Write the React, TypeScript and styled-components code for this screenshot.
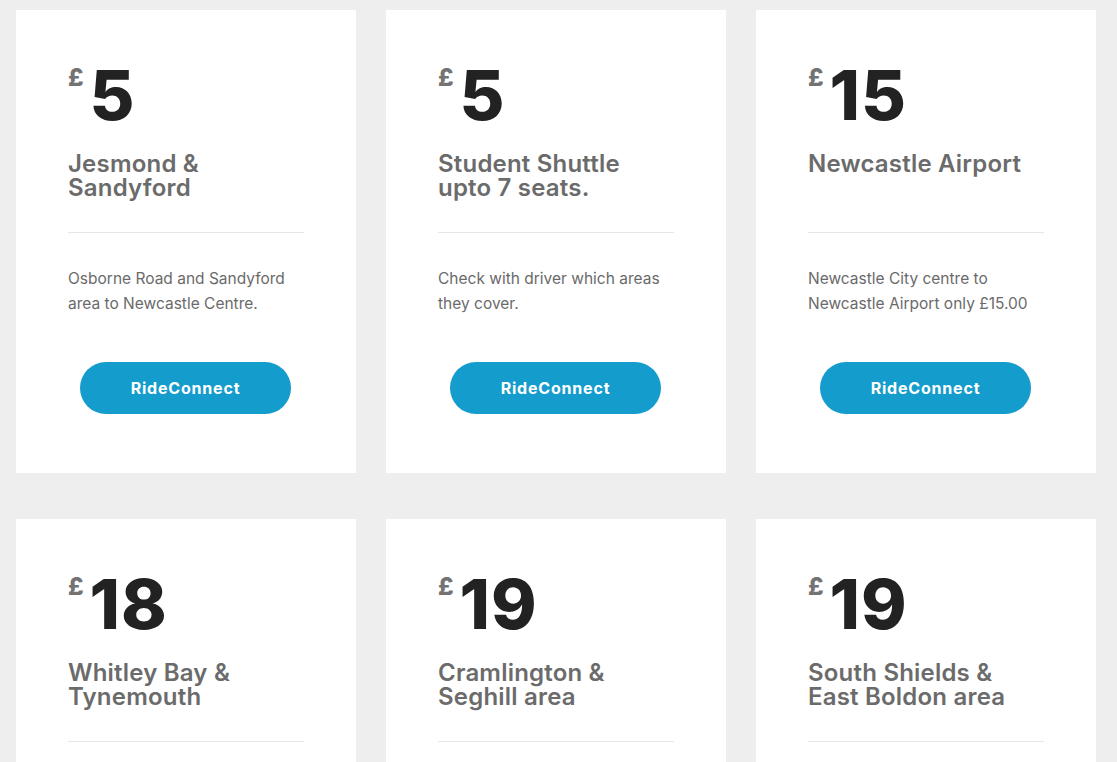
import React from 'react'
import styled, {createGlobalStyle} from 'styled-components'

const GlobalStyle = createGlobalStyle`
  html, body {
    margin: 0;
    padding: 0;
    background: #eeeeee;
  }
  body {
    font-family: 'Inter', 'Roboto', sans-serif;
  }
`

const Grid = styled.section`
  display: grid;
  grid-template-columns: repeat(3, 340px);
  column-gap: 30px;
  row-gap: 46px;
  padding: 10px 16px;
`

const Card = styled.div`
  background: #ffffff;
  padding: 52px 52px 59px;
  display: flex;
  flex-direction: column;
`

const Price = styled.div`
  display: flex;
  align-items: flex-start;
  gap: 6px;
`

const Currency = styled.span`
  font-size: 24px;
  font-weight: 800;
  line-height: 1;
  color: #737373;
  margin-top: 4px;
`

const Amount = styled.span`
  font-size: 69px;
  font-weight: 800;
  line-height: 66px;
  color: #222222;
  letter-spacing: 1px;
`

const Title = styled.h3`
  margin: 24px 0 0;
  font-size: 24px;
  font-weight: 600;
  line-height: 24px;
  letter-spacing: 0.2px;
  min-height: 48px;
  color: #6b6b6b;
`

const Divider = styled.hr`
  border: 0;
  border-top: 1px solid #e6e6e6;
  margin: 32px 0 0;
`

const Description = styled.p`
  margin: 33px 0 0;
  font-size: 15.5px;
  line-height: 25px;
  min-height: 50px;
  color: #6a6a6a;
`

const Button = styled.button`
  align-self: center;
  margin: 46px 1px 0 0;
  width: 211px;
  height: 52px;
  border: 0;
  border-radius: 26px;
  background: #149ccc;
  color: #ffffff;
  font-family: inherit;
  font-size: 16px;
  font-weight: 700;
  letter-spacing: 0.8px;
  cursor: pointer;
`

type Fare = {amount: string; lines: string[]; text: string}

const fares: Fare[] = [
  {amount: '5', lines: ['Jesmond &', 'Sandyford'], text: 'Osborne Road and Sandyford area to Newcastle Centre.'},
  {amount: '5', lines: ['Student Shuttle', 'upto 7 seats.'], text: 'Check with driver which areas they cover.'},
  {amount: '15', lines: ['Newcastle Airport'], text: 'Newcastle City centre to Newcastle Airport only £15.00'},
  {amount: '18', lines: ['Whitley Bay &', 'Tynemouth'], text: 'Whitley Bay and Tynemouth to Newcastle Centre.'},
  {amount: '19', lines: ['Cramlington &', 'Seghill area'], text: 'Cramlington and Seghill area to Newcastle Centre.'},
  {amount: '19', lines: ['South Shields &', 'East Boldon area'], text: 'South Shields and East Boldon to Newcastle Centre.'},
]

export default function App() {
  return (
    <>
      <GlobalStyle />
      <Grid>
        {fares.map((f, i) => (
          <Card key={i}>
            <Price>
              <Currency>£</Currency>
              <Amount>{f.amount}</Amount>
            </Price>
            <Title>
              {f.lines.map((l, j) => (
                <React.Fragment key={j}>
                  {j > 0 && <br />}
                  {l}
                </React.Fragment>
              ))}
            </Title>
            <Divider />
            <Description>{f.text}</Description>
            <Button>RideConnect</Button>
          </Card>
        ))}
      </Grid>
    </>
  )
}
